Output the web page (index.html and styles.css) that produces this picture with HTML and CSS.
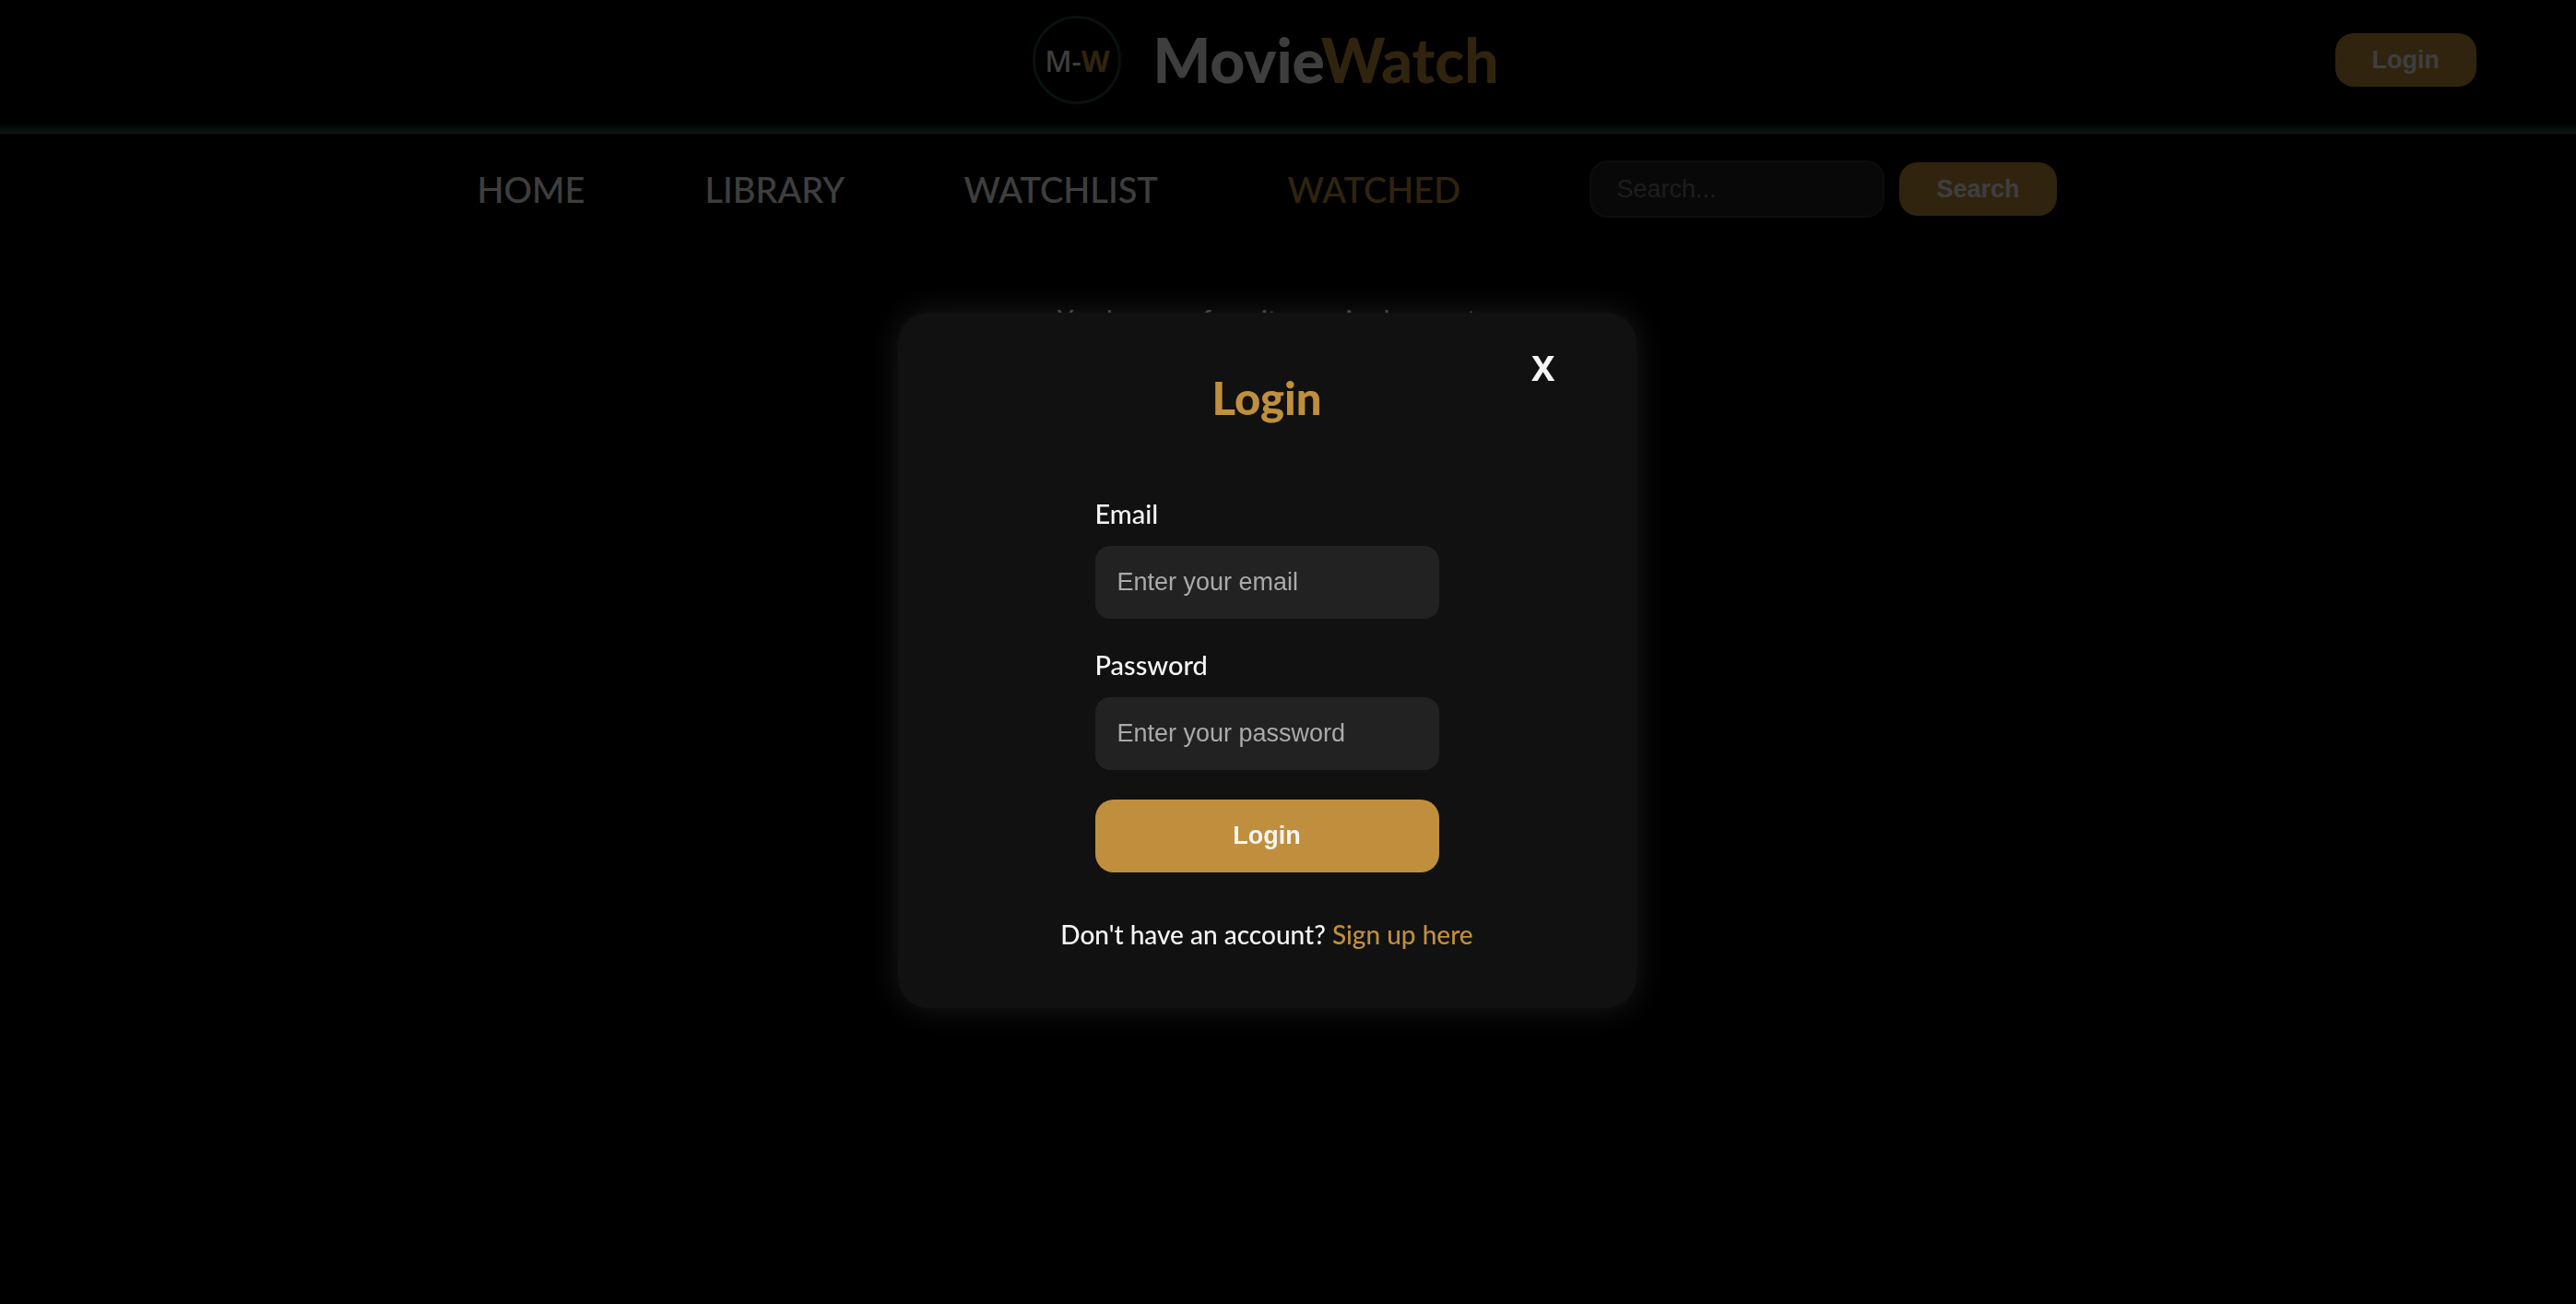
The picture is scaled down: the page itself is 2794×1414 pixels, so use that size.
FILE: index.html
```html
<!DOCTYPE html>
<html lang="en">
<head>
<meta charset="utf-8">
<meta name="viewport" content="width=device-width, initial-scale=1">
<title>MovieWatch</title>
<link rel="stylesheet" href="styles.css">
</head>
<body>
<header class="header">
  <a class="brand" href="#">
    <span class="badge"><span class="badge-m">M-</span><b class="gold">W</b></span>
    <span class="brand-name">Movie<span class="gold">Watch</span></span>
  </a>
  <button class="btn header-login" type="button">Login</button>
</header>
<nav class="nav">
  <a class="nav-link" href="#">HOME</a>
  <a class="nav-link" href="#">LIBRARY</a>
  <a class="nav-link" href="#">WATCHLIST</a>
  <a class="nav-link gold" href="#">WATCHED</a>
  <form class="search">
    <input class="search-input" type="search" placeholder="Search..." aria-label="Search">
    <button class="btn" type="button">Search</button>
  </form>
</nav>
<main class="main">
  <p class="empty">You have no favorite movies here yet</p>
</main>
<div class="overlay">
  <section class="modal" role="dialog" aria-modal="true" aria-labelledby="login-title">
    <button class="close" type="button" aria-label="Close">X</button>
    <h2 class="title" id="login-title">Login</h2>
    <form class="form">
      <label class="label" for="email">Email</label>
      <input class="field" id="email" type="email" placeholder="Enter your email">
      <label class="label" for="password">Password</label>
      <input class="field" id="password" type="password" placeholder="Enter your password">
      <button class="btn submit" type="button">Login</button>
    </form>
    <p class="signup">Don't have an account? <a class="gold" href="#">Sign up here</a></p>
  </section>
</div>
</body>
</html>
```
FILE: styles.css
```css
* { box-sizing: border-box; }

body {
  margin: 0;
  min-height: 100vh;
  background: #000;
  color: whitesmoke;
  font-family: "Gill Sans", "Gill Sans MT", Lato, sans-serif;
  font-size: 28px;
  font-weight: 500;
}

a { color: inherit; text-decoration: none; }
.gold, a.gold { color: #c08f3d; }

button, input {
  font-family: Arial, "Liberation Sans", sans-serif;
  font-size: 27px;
}

.btn {
  height: 58px;
  padding: 0 40px;
  border: 0;
  border-radius: 20px;
  background: #c08f3d;
  color: whitesmoke;
  font-weight: 700;
}

.header {
  display: grid;
  grid-template-columns: 1fr auto 1fr;
  align-items: center;
  height: 145px;
  padding: 0 108px 15px 60px;
  background: linear-gradient(to top, #2b6255, transparent 12px);
}

.brand {
  grid-column: 2;
  display: flex;
  align-items: center;
  gap: 34px;
}

.badge {
  display: flex;
  align-items: center;
  justify-content: center;
  width: 96px;
  height: 96px;
  border: 3px solid #22483f;
  border-radius: 50%;
  font: 500 32px "Noto Sans", sans-serif;
}

.badge b { font-weight: 700; }

.brand-name {
  font-size: 66px;
  font-weight: 900;
  line-height: 72px;
}

.header-login { justify-self: end; }

.nav {
  display: grid;
  grid-template-columns: 113px 147px 217px 194px auto;
  justify-content: center;
  align-items: center;
  gap: 134px;
  padding: 29px 46px 0 0;
}

.nav-link {
  font-size: 38px;
  line-height: 48px;
  white-space: nowrap;
}

.search {
  display: flex;
  align-items: center;
  gap: 16px;
}

.search-input {
  width: 320px;
  height: 62px;
  padding: 0 27px;
  border: 2px solid #333;
  border-radius: 20px;
  background: #222;
  color: whitesmoke;
}

.search-input::placeholder { color: #757575; }

.main { padding: 90px 46px 0 0; text-align: center; }

.empty { margin: 0; line-height: 40px; }

.overlay {
  position: fixed;
  inset: 0;
  display: flex;
  align-items: center;
  justify-content: center;
  padding: 18px 46px 0 0;
  background: rgba(0, 0, 0, 0.75);
}

.modal {
  position: relative;
  display: flex;
  flex-direction: column;
  align-items: center;
  width: 801px;
  max-width: 100%;
  padding: 64px 40px 56px;
  border-radius: 33px;
  background: #111;
  box-shadow: 0 0 33px rgba(255, 255, 255, 0.1);
}

.close {
  position: absolute;
  top: 35px;
  right: 88px;
  padding: 0;
  border: 0;
  background: none;
  color: whitesmoke;
  font: 700 38px/48px "Noto Sans", sans-serif;
}

.title {
  margin: 0;
  color: #c08f3d;
  font-size: 49px;
  font-weight: 900;
  line-height: 56px;
}

.form {
  display: flex;
  flex-direction: column;
  width: 373px;
  padding-top: 78px;
}

.label {
  padding-bottom: 15px;
  font-size: 29px;
  line-height: 40px;
}

.field {
  height: 79px;
  margin-bottom: 30px;
  padding: 0 24px;
  border: 0;
  border-radius: 16px;
  background: #222;
  color: whitesmoke;
}

.field::placeholder { color: #aaa; }

.submit { height: 79px; margin-top: 2px; }

.signup {
  margin: 0;
  padding-top: 43px;
  font-size: 28px;
  line-height: 48px;
}
```
